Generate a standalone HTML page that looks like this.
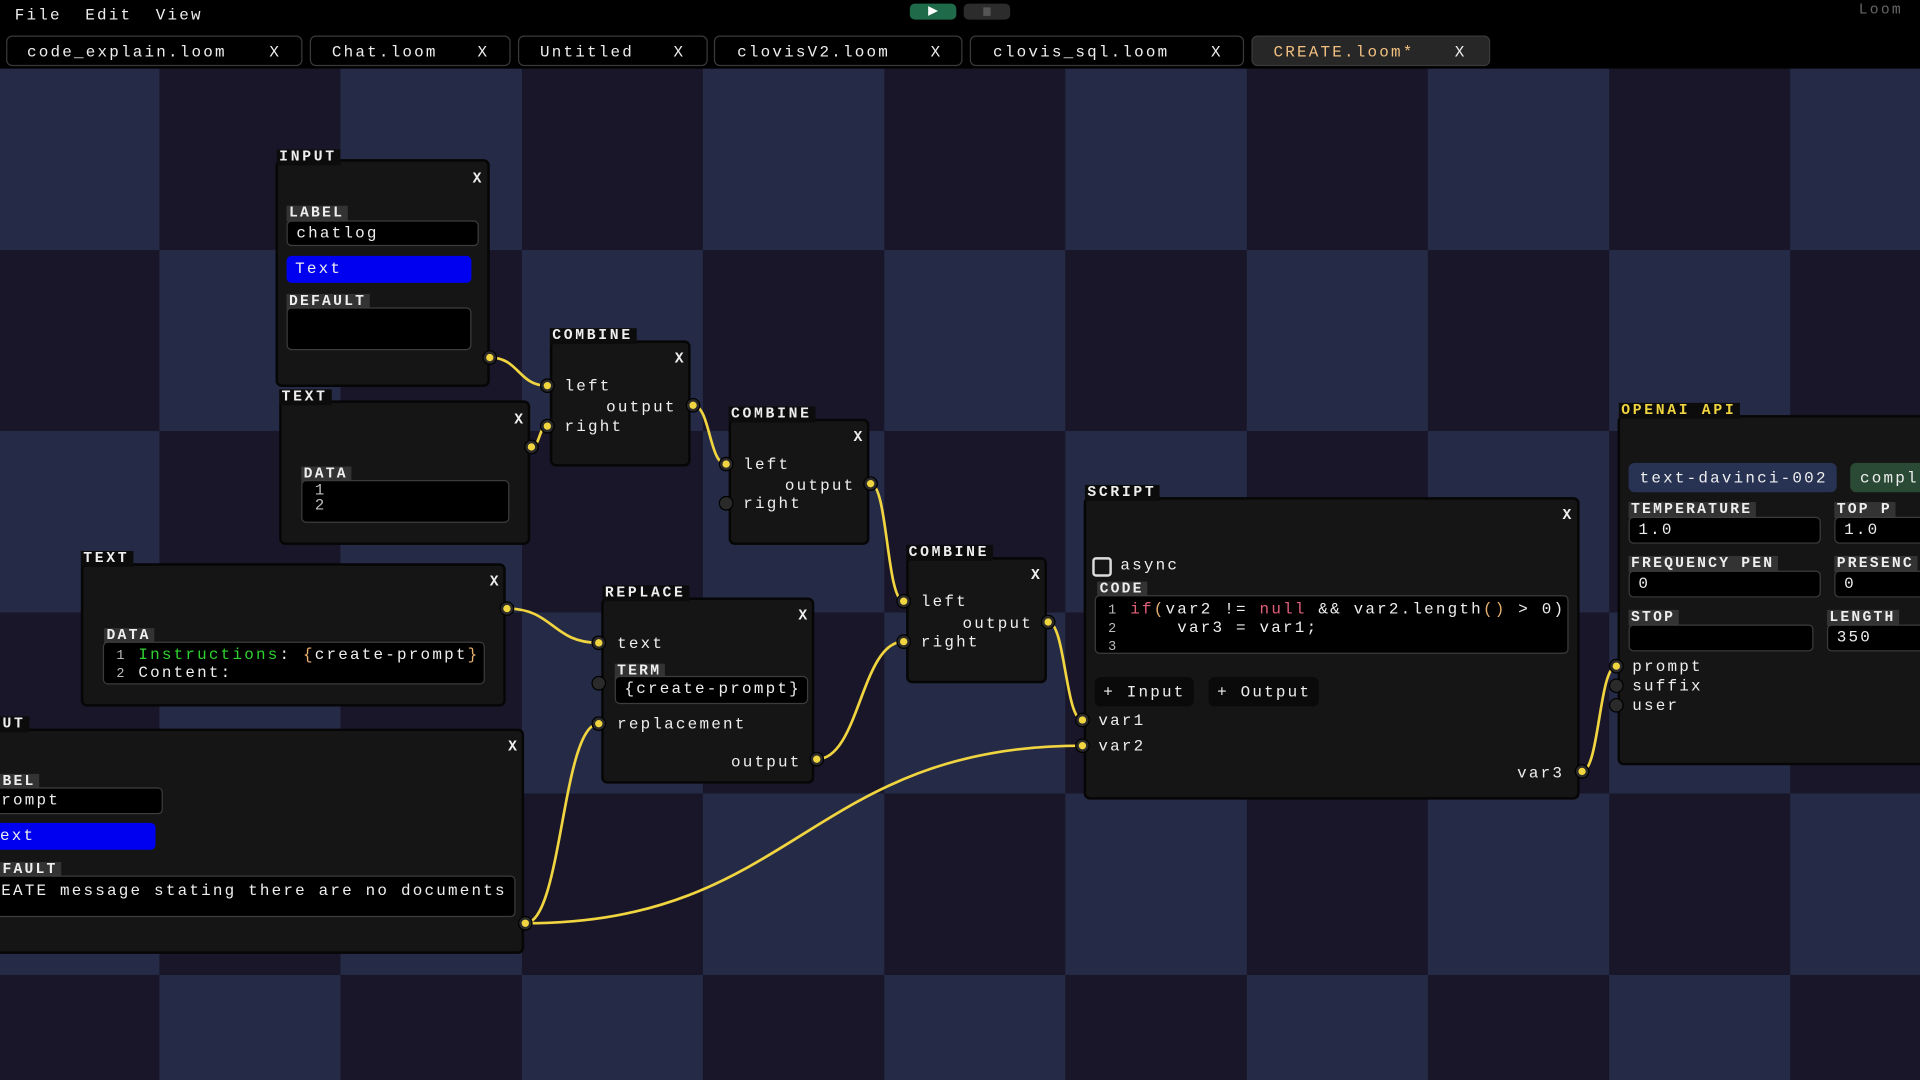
<!DOCTYPE html>
<html><head><meta charset="utf-8"><style>
html,body{margin:0;padding:0;width:1920px;height:1080px;overflow:hidden;background:#000}
#st{position:absolute;left:0;top:0;width:1568px;height:882px;transform:scale(1.22449);transform-origin:0 0;overflow:hidden;font-family:"Liberation Mono",monospace;font-size:13px;letter-spacing:1.8px;color:#eee}
#bg{position:absolute;left:0;top:56px;width:1568px;height:826px;
background-color:#181628;
background-image:conic-gradient(#181628 0 25%,#252b46 0 50%,#181628 0 75%,#252b46 0);
background-size:296px 296px;background-position:-18px 0}
#top{position:absolute;left:0;top:0;width:1568px;height:56px;background:#000}
.a{position:absolute;white-space:pre}
.tab{position:absolute;top:29px;height:25px;border:1px solid #3a3a3a;border-radius:5px;background:#000;box-sizing:border-box}
.n{position:absolute;background:#151515;border:2px solid #060606;border-radius:5px;box-sizing:border-box}
.h{position:absolute;background:#0c0c0c;font-weight:bold;font-size:12px;letter-spacing:2.2px;padding:0 3px 0 2px;line-height:13px;white-space:pre}
.fl{position:absolute;background:#333;font-weight:bold;font-size:12px;letter-spacing:1.8px;padding:0 3px 0 2px;line-height:13px;white-space:pre}
.in{position:absolute;background:#000;border:1px solid #3c3c3c;border-radius:4px;box-sizing:border-box;white-space:pre;padding-left:7px;line-height:19px}
.bl{position:absolute;background:#0000f0;border-radius:4px;padding-left:7px;line-height:22px;box-sizing:border-box}
.x{position:absolute;font-size:12px;font-weight:bold}
.p{position:absolute;width:12px;height:12px;margin:-6px 0 0 -6px;border-radius:50%;background:#2a2a2a;border:1px solid #000;box-sizing:border-box}
.p.c::after{content:"";position:absolute;left:2px;top:2px;width:6px;height:6px;border-radius:50%;background:#f0d440}
.g{color:#bbb}
</style></head><body><div id="st">
<div id="bg"></div>
<div id="top"></div>
<div class="a" style="left:12px;top:5px">File  Edit  View</div>
<div style="position:absolute;left:743px;top:3px;width:38px;height:13px;background:#1f6a48;border-radius:4px"><div style="position:absolute;left:15px;top:2px;width:0;height:0;border-left:8px solid #fff;border-top:4.5px solid transparent;border-bottom:4.5px solid transparent"></div></div>
<div style="position:absolute;left:787px;top:3px;width:38px;height:13px;background:#2c2c2c;border-radius:4px"><div style="position:absolute;left:16px;top:3px;width:6px;height:7px;background:#555"></div></div>
<div class="a" style="left:1518px;top:1px;color:#666;font-size:12px">Loom</div>
<div class="tab" style="left:5px;width:242px"></div><div class="a" style="left:22px;top:35px">code_explain.loom</div><div class="a" style="left:220px;top:35px">X</div>
<div class="tab" style="left:253px;width:164px"></div><div class="a" style="left:271px;top:35px">Chat.loom</div><div class="a" style="left:390px;top:35px">X</div>
<div class="tab" style="left:423px;width:155px"></div><div class="a" style="left:441px;top:35px">Untitled</div><div class="a" style="left:550px;top:35px">X</div>
<div class="tab" style="left:583px;width:203px"></div><div class="a" style="left:602px;top:35px">clovisV2.loom</div><div class="a" style="left:760px;top:35px">X</div>
<div class="tab" style="left:792px;width:224px"></div><div class="a" style="left:811px;top:35px">clovis_sql.loom</div><div class="a" style="left:989px;top:35px">X</div>
<div class="tab" style="left:1022px;width:195px;background:#272727"></div><div class="a" style="left:1040px;top:35px;color:#f2c080">CREATE.loom*</div><div class="a" style="left:1188px;top:35px">X</div>

<svg style="position:absolute;left:0;top:0" width="1568" height="882" fill="none" stroke="#f0d440" stroke-width="2.2">
<path d="M400 292 C424 292 423 315 447 315"/>
<path d="M434 365 C441 365 440 348 447 348"/>
<path d="M566 331 C580 331 579 379 593 379"/>
<path d="M711 395 C725 395 724 491 738 491"/>
<path d="M414 497 C452 497 451 525 489 525"/>
<path d="M667 620 C702 620 703 524 738 524"/>
<path d="M856 508 C870 508 870 588 884 588"/>
<path d="M429 754 C459 754 459 591 489 591"/>
<path d="M429 754 C650 754 660 609 884 609"/>
<path d="M1292 630 C1306 630 1306 544 1320 544"/>
</svg>

<!-- INPUT 1 -->
<div class="n" style="left:225px;top:130px;width:175px;height:186px"></div>
<div class="h" style="left:226px;top:122px">INPUT</div>
<div class="x" style="left:386px;top:139px">X</div>
<div class="fl" style="left:234px;top:168px">LABEL</div>
<div class="in" style="left:234px;top:180px;width:157px;height:21px">chatlog</div>
<div class="bl" style="left:234px;top:209px;width:151px;height:22px">Text</div>
<div class="fl" style="left:234px;top:240px">DEFAULT</div>
<div class="in" style="left:234px;top:251px;width:151px;height:35px"></div>
<div class="p c" style="left:400px;top:292px"></div>

<!-- TEXT 1 -->
<div class="n" style="left:228px;top:327px;width:205px;height:118px"></div>
<div class="h" style="left:228px;top:318px">TEXT</div>
<div class="x" style="left:420px;top:336px">X</div>
<div class="fl" style="left:246px;top:381px">DATA</div>
<div class="in" style="left:246px;top:392px;width:170px;height:35px;line-height:12px;padding-top:2px;padding-left:10px"><span class="g">1
2</span></div>
<div class="p c" style="left:434px;top:365px"></div>

<!-- COMBINE 1 -->
<div class="n" style="left:449px;top:278px;width:115px;height:103px"></div>
<div class="h" style="left:449px;top:268px">COMBINE</div>
<div class="x" style="left:551px;top:286px">X</div>
<div class="a" style="left:461px;top:308px">left</div>
<div class="a" style="left:495px;top:325px">output</div>
<div class="a" style="left:461px;top:341px">right</div>
<div class="p c" style="left:447px;top:315px"></div><div class="p c" style="left:447px;top:348px"></div><div class="p c" style="left:566px;top:331px"></div>

<!-- COMBINE 2 -->
<div class="n" style="left:595px;top:342px;width:115px;height:103px"></div>
<div class="h" style="left:595px;top:332px">COMBINE</div>
<div class="x" style="left:697px;top:350px">X</div>
<div class="a" style="left:607px;top:372px">left</div>
<div class="a" style="left:641px;top:389px">output</div>
<div class="a" style="left:607px;top:404px">right</div>
<div class="p c" style="left:593px;top:379px"></div><div class="p" style="left:593px;top:411px"></div><div class="p c" style="left:711px;top:395px"></div>

<!-- COMBINE 3 -->
<div class="n" style="left:740px;top:455px;width:115px;height:103px"></div>
<div class="h" style="left:740px;top:445px">COMBINE</div>
<div class="x" style="left:842px;top:463px">X</div>
<div class="a" style="left:752px;top:484px">left</div>
<div class="a" style="left:786px;top:502px">output</div>
<div class="a" style="left:752px;top:517px">right</div>
<div class="p c" style="left:738px;top:491px"></div><div class="p c" style="left:738px;top:524px"></div><div class="p c" style="left:856px;top:508px"></div>

<!-- TEXT 2 -->
<div class="n" style="left:66px;top:460px;width:347px;height:117px"></div>
<div class="h" style="left:66px;top:450px">TEXT</div>
<div class="x" style="left:400px;top:468px">X</div>
<div class="fl" style="left:85px;top:513px">DATA</div>
<div class="in" style="left:84px;top:524px;width:312px;height:35px;line-height:13px;padding-top:3px;padding-left:10px"><span class="g" style="font-size:11px">1</span> <span style="color:#2fd22f">Instructions</span>: <span style="color:#e8b070">{</span>create-prompt<span style="color:#e8b070">}</span>
<span class="g" style="font-size:11px">2</span> Content:</div>
<div class="p c" style="left:414px;top:497px"></div>

<!-- REPLACE -->
<div class="n" style="left:491px;top:488px;width:174px;height:152px"></div>
<div class="h" style="left:492px;top:478px">REPLACE</div>
<div class="x" style="left:652px;top:496px">X</div>
<div class="a" style="left:504px;top:518px">text</div>
<div class="fl" style="left:502px;top:542px">TERM</div>
<div class="in" style="left:502px;top:552px;width:158px;height:23px">{create-prompt}</div>
<div class="a" style="left:504px;top:584px">replacement</div>
<div class="a" style="left:597px;top:615px">output</div>
<div class="p c" style="left:489px;top:525px"></div><div class="p" style="left:489px;top:558px"></div><div class="p c" style="left:489px;top:591px"></div><div class="p c" style="left:667px;top:620px"></div>

<!-- INPUT 2 -->
<div class="n" style="left:-10px;top:595px;width:438px;height:184px"></div>
<div class="h" style="left:0px;top:585px">UT</div>
<div class="x" style="left:415px;top:603px">X</div>
<div class="fl" style="left:0px;top:632px">BEL</div>
<div class="in" style="left:-10px;top:643px;width:143px;height:22px;padding-left:10px">rompt</div>
<div class="bl" style="left:-10px;top:672px;width:137px;height:22px;padding-left:10px">ext</div>
<div class="fl" style="left:0px;top:704px">FAULT</div>
<div class="in" style="left:-10px;top:715px;width:431px;height:34px;padding-left:10px;line-height:24px">EATE message stating there are no documents</div>
<div class="p c" style="left:429px;top:754px"></div>

<!-- SCRIPT -->
<div class="n" style="left:885px;top:406px;width:405px;height:247px"></div>
<div class="h" style="left:886px;top:396px">SCRIPT</div>
<div class="x" style="left:1276px;top:414px">X</div>
<div style="position:absolute;left:892px;top:455px;width:12px;height:12px;border:2px solid #ddd;border-radius:3px"></div>
<div class="a" style="left:915px;top:454px">async</div>
<div class="fl" style="left:896px;top:475px">CODE</div>
<div class="in" style="left:894px;top:486px;width:387px;height:48px;line-height:13px;padding-top:4px;padding-left:10px"><span class="g" style="font-size:11px">1</span> <span style="color:#e0607a">if</span><span style="color:#e8b070">(</span>var2 != <span style="color:#e0607a">null</span> &amp;&amp; var2.length<span style="color:#e8b070">()</span> &gt; 0)
<span class="g" style="font-size:11px">2</span>     var3 = var1;
<span class="g" style="font-size:11px">3</span></div>
<div style="position:absolute;left:894px;top:553px;width:81px;height:24px;background:#0a0a0a;border-radius:5px"></div>
<div class="a" style="left:901px;top:558px">+ Input</div>
<div style="position:absolute;left:987px;top:553px;width:90px;height:24px;background:#0a0a0a;border-radius:5px"></div>
<div class="a" style="left:994px;top:558px">+ Output</div>
<div class="a" style="left:897px;top:581px">var1</div>
<div class="a" style="left:897px;top:602px">var2</div>
<div class="a" style="left:1239px;top:624px">var3</div>
<div class="p c" style="left:884px;top:588px"></div><div class="p c" style="left:884px;top:609px"></div><div class="p c" style="left:1292px;top:630px"></div>

<!-- OPENAI -->
<div class="n" style="left:1321px;top:339px;width:260px;height:286px"></div>
<div class="h" style="left:1322px;top:329px;color:#f0d440">OPENAI API</div>
<div style="position:absolute;left:1330px;top:378px;width:170px;height:24px;background:#283354;border-radius:5px"></div>
<div class="a" style="left:1339px;top:383px">text-davinci-002</div>
<div style="position:absolute;left:1511px;top:378px;width:80px;height:24px;background:#2b4a35;border-radius:5px"></div>
<div class="a" style="left:1519px;top:383px">compl</div>
<div class="fl" style="left:1330px;top:410px">TEMPERATURE</div>
<div class="in" style="left:1330px;top:422px;width:157px;height:22px">1.0</div>
<div class="fl" style="left:1498px;top:410px">TOP P</div>
<div class="in" style="left:1498px;top:422px;width:90px;height:22px">1.0</div>
<div class="fl" style="left:1330px;top:454px">FREQUENCY PEN</div>
<div class="in" style="left:1330px;top:466px;width:157px;height:22px">0</div>
<div class="fl" style="left:1498px;top:454px">PRESENC</div>
<div class="in" style="left:1498px;top:466px;width:90px;height:22px">0</div>
<div class="fl" style="left:1330px;top:498px">STOP</div>
<div class="in" style="left:1330px;top:510px;width:151px;height:22px"></div>
<div class="fl" style="left:1492px;top:498px">LENGTH</div>
<div class="in" style="left:1492px;top:510px;width:96px;height:22px">350</div>
<div class="a" style="left:1333px;top:537px">prompt</div>
<div class="a" style="left:1333px;top:553px">suffix</div>
<div class="a" style="left:1333px;top:569px">user</div>
<div class="p c" style="left:1320px;top:544px"></div><div class="p" style="left:1320px;top:560px"></div><div class="p" style="left:1320px;top:576px"></div>
</div></body></html>
